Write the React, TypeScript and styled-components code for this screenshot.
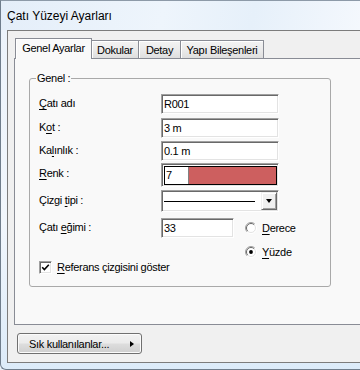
import React from "react";
import styled, { createGlobalStyle } from "styled-components";

const GlobalStyle = createGlobalStyle`
  html, body {
    margin: 0;
    padding: 0;
    overflow: hidden;
    background: #e9f1fa;
  }
  body {
    font-family: "Liberation Sans", Arial, sans-serif;
    font-size: 11px;
    letter-spacing: -0.3px;
    color: #000;
  }
`;

// window chrome (right side runs off the picture, so no right border)
const Frame = styled.div`
  width: 360px;
  height: 370px;
  box-sizing: border-box;
  border-top: 1px solid #8d9aa8;
  border-left: 1px solid #6f7d8c;
  border-bottom: 1px solid #6f7d8c;
  border-bottom-left-radius: 6px;
  background: linear-gradient(180deg, #e1ecf8 0%, #ecf3fb 8%, #f1f6fc 60%, #dcebf9 100%);
  display: flex;
  flex-direction: column;
`;

const TitleBar = styled.div`
  height: 29px;
  display: flex;
  align-items: center;
  padding-left: 6px;
  font-size: 12px;
  letter-spacing: 0;
  line-height: 14px;
  background: linear-gradient(100deg, #e4eef9 0%, #eef5fc 45%, #e6f0fa 70%, #f4f8fd 100%);
`;

const Client = styled.div`
  margin-left: 6px;
  height: 333px;
  box-sizing: border-box;
  border: 1px solid #7c7c7c;
  border-right: none;
  background: #f0f0f0;
  padding: 7px 0 0 6px;
`;

// tabs
const TabStrip = styled.div`
  display: flex;
  align-items: flex-end;
  height: 20px;
  padding-left: 1px;
`;

const Tab = styled.div<{ $w: number; $active?: boolean; $first?: boolean }>`
  position: relative;
  z-index: ${(p) => (p.$active ? 1 : 0)};
  width: ${(p) => p.$w}px;
  height: ${(p) => (p.$active ? 21 : 18)}px;
  margin-bottom: ${(p) => (p.$active ? -1 : 0)}px;
  box-sizing: border-box;
  border: 1px solid #898c95;
  border-bottom: none;
  border-left: ${(p) => (p.$first || p.$active ? "1px solid #898c95" : "none")};
  background: ${(p) =>
    p.$active ? "#f9f9f9" : "linear-gradient(180deg, #f3f3f3 0%, #ebebeb 50%, #dedede 100%)"};
  box-shadow: inset 1px 1px 0 #ffffff;
  display: flex;
  align-items: center;
  justify-content: center;
  padding-bottom: ${(p) => (p.$active ? 3 : 0)}px;
  white-space: nowrap;
`;

const Panel = styled.div`
  height: 267px;
  box-sizing: border-box;
  border: 1px solid #898c95;
  border-right: none;
  background: #f9f9f9;
  padding: 12px 0 0 14px;
`;

// group box
const Group = styled.fieldset`
  width: 302px;
  box-sizing: border-box;
  margin: 0;
  padding: 9px 0 12px 9px;
  border: 1px solid #a9a9a9;
  border-radius: 3px;
`;

const Legend = styled.legend`
  padding: 0 1px;
  margin-left: -3px;
  line-height: 14px;
`;

const Row = styled.div<{ $mt?: number }>`
  display: flex;
  align-items: flex-start;
  margin-top: ${(p) => p.$mt ?? 0}px;
`;

const Label = styled.div<{ $lh?: number }>`
  flex: 0 0 122px;
  line-height: ${(p) => p.$lh ?? 19}px;
  white-space: nowrap;
`;

const U = styled.span`
  text-decoration: underline;
  text-underline-offset: 2px;
`;

const sunken = `
  border-style: solid;
  border-width: 1px;
  border-color: #a0a0a0 #ffffff #ffffff #a0a0a0;
  box-shadow: inset 1px 1px 0 #696969, inset -1px -1px 0 #e3e3e3;
`;

const TextBox = styled.div<{ $w: number }>`
  width: ${(p) => p.$w}px;
  height: 20px;
  box-sizing: border-box;
  ${sunken}
  background: #fff;
  padding-left: 2px;
  line-height: 18px;
`;

const ColorBox = styled.div`
  width: 118px;
  height: 24px;
  box-sizing: border-box;
  ${sunken}
  background: #fff;
  padding: 2px 1px 1px 2px;
`;

const ColorInner = styled.div`
  height: 100%;
  box-sizing: border-box;
  border: 1px solid #000;
  display: flex;
`;

const ColorNum = styled.div`
  width: 22px;
  background: #fff;
  border-right: 1px solid #808080;
  padding-left: 1px;
  line-height: 17px;
`;

const Swatch = styled.div<{ $c: string }>`
  flex: 1;
  background: ${(p) => p.$c};
`;

const Combo = styled.div`
  width: 118px;
  height: 22px;
  box-sizing: border-box;
  ${sunken}
  background: #fff;
  padding: 1px;
  display: flex;
  align-items: stretch;
`;

const ComboLine = styled.div`
  flex: 1;
  margin: 0 6px 0 1px;
  display: flex;
  align-items: center;
  &::after {
    content: "";
    display: block;
    width: 100%;
    height: 1px;
    background: #000;
  }
`;

const DropButton = styled.div`
  width: 16px;
  box-sizing: border-box;
  background: #f0f0f0;
  border: 1px solid;
  border-color: #f0f0f0 #696969 #696969 #f0f0f0;
  box-shadow: inset 1px 1px 0 #ffffff, inset -1px -1px 0 #a0a0a0;
  display: flex;
  align-items: center;
  justify-content: center;
  &::after {
    content: "";
    width: 0;
    height: 0;
    border-left: 3.5px solid transparent;
    border-right: 3.5px solid transparent;
    border-top: 4px solid #000;
  }
`;

const RadioGroup = styled.div`
  display: flex;
  flex-direction: column;
  gap: 8px;
  margin: 2px 0 0 11px;
`;

const Option = styled.div`
  display: flex;
  align-items: center;
  gap: 5px;
  height: 16px;
  white-space: nowrap;
`;

const CheckRow = styled.div`
  display: flex;
  align-items: center;
  gap: 5px;
  height: 14px;
`;

const CheckBox = styled.span`
  width: 13px;
  height: 13px;
  box-sizing: border-box;
  ${sunken}
  background: #fff;
  display: flex;
  align-items: center;
  justify-content: center;
`;

const Footer = styled.div`
  display: flex;
  padding: 8px 0 0 3px;
`;

const FavButton = styled.button`
  width: 125px;
  height: 21px;
  box-sizing: border-box;
  border: 1px solid #707070;
  border-radius: 3px;
  background: linear-gradient(180deg, #f2f2f2 0%, #ebebeb 48%, #dddddd 52%, #cfcfcf 100%);
  box-shadow: inset 0 0 0 1px #fbfbfb;
  display: flex;
  align-items: center;
  padding: 0 7px 0 11px;
  font: inherit;
  letter-spacing: inherit;
  color: #000;
`;

const Arrow = styled.span`
  margin-left: auto;
  width: 0;
  height: 0;
  border-top: 3.5px solid transparent;
  border-bottom: 3.5px solid transparent;
  border-left: 4px solid #000;
`;

const Radio: React.FC<{ checked?: boolean }> = ({ checked }) => (
  <svg width="12" height="12" viewBox="0 0 12 12">
    <circle cx="6" cy="6" r="5" fill="#fff" />
    <path d="M2.1 9.9 A5.5 5.5 0 0 1 9.9 2.1" fill="none" stroke="#a0a0a0" strokeWidth="1" />
    <path d="M2.8 9.2 A4.5 4.5 0 0 1 9.2 2.8" fill="none" stroke="#696969" strokeWidth="1" />
    <path d="M9.9 2.1 A5.5 5.5 0 0 1 2.1 9.9" fill="none" stroke="#ffffff" strokeWidth="1" />
    <path d="M9.2 2.8 A4.5 4.5 0 0 1 2.8 9.2" fill="none" stroke="#e3e3e3" strokeWidth="1" />
    {checked && <circle cx="6" cy="6" r="1.9" fill="#000" />}
  </svg>
);

const tabs = [
  { label: "Genel Ayarlar", w: 77 },
  { label: "Dokular", w: 47 },
  { label: "Detay", w: 42 },
  { label: "Yapı Bileşenleri", w: 83 },
];

export default function App() {
  return (
    <>
      <GlobalStyle />
      <Frame>
        <TitleBar>Çatı Yüzeyi Ayarları</TitleBar>
        <Client>
          <TabStrip>
            {tabs.map((t, i) => (
              <Tab key={t.label} $w={t.w} $active={i === 0} $first={i === 0}>
                {t.label}
              </Tab>
            ))}
          </TabStrip>
          <Panel>
            <Group>
              <Legend>Genel :</Legend>
              <Row>
                <Label>
                  <U>Ç</U>atı adı
                </Label>
                <TextBox $w={118}>R001</TextBox>
              </Row>
              <Row $mt={4}>
                <Label>
                  K<U>o</U>t :
                </Label>
                <TextBox $w={118}>3 m</TextBox>
              </Row>
              <Row $mt={3}>
                <Label>
                  Ka<U>l</U>ınlık :
                </Label>
                <TextBox $w={118}>0.1 m</TextBox>
              </Row>
              <Row $mt={2}>
                <Label $lh={20}>
                  <U>R</U>enk :
                </Label>
                <ColorBox>
                  <ColorInner>
                    <ColorNum>7</ColorNum>
                    <Swatch $c="#cd5f5f" />
                  </ColorInner>
                </ColorBox>
              </Row>
              <Row $mt={3}>
                <Label $lh={21}>
                  Çizgi <U>t</U>ipi :
                </Label>
                <Combo>
                  <ComboLine />
                  <DropButton />
                </Combo>
              </Row>
              <Row $mt={6}>
                <Label>
                  Çatı <U>e</U>ğimi :
                </Label>
                <TextBox $w={73}>33</TextBox>
                <RadioGroup>
                  <Option>
                    <Radio />
                    <span>
                      <U>D</U>erece
                    </span>
                  </Option>
                  <Option>
                    <Radio checked />
                    <span>
                      <U>Y</U>üzde
                    </span>
                  </Option>
                </RadioGroup>
              </Row>
              <CheckRow>
                <CheckBox>
                  <svg width="9" height="9" viewBox="0 0 9 9">
                    <path d="M1.2 4.2 L3.4 6.6 L7.8 1.8" fill="none" stroke="#000" strokeWidth="1.6" />
                  </svg>
                </CheckBox>
                <span>
                  <U>R</U>eferans çizgisini göster
                </span>
              </CheckRow>
            </Group>
          </Panel>
          <Footer>
            <FavButton>
              Sık kullanılanlar...
              <Arrow />
            </FavButton>
          </Footer>
        </Client>
      </Frame>
    </>
  );
}
